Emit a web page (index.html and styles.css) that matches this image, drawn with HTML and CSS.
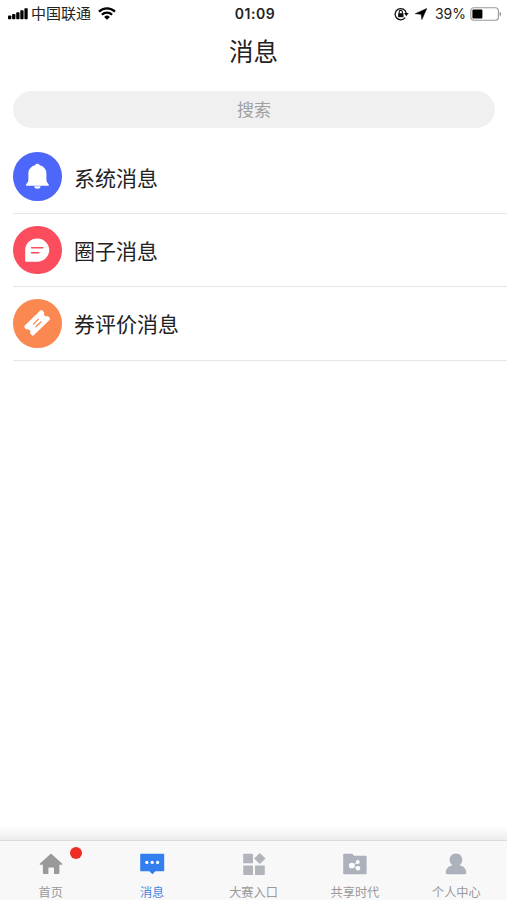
FILE: index.html
```html
<!DOCTYPE html>
<html lang="zh-CN">

<head>
    <meta charset="UTF-8">
    <meta name="viewport" content="width=device-width, initial-scale=1.0">
    <title>消息</title>
    <link rel="stylesheet" href="styles.css">
</head>

<body>
    <!-- 状态栏 -->
    <div class="status-bar">
        <div class="status-left">
            <svg class="signal" width="20" height="12" viewBox="0 0 20 12">
                <rect x="0" y="7.5" width="3.3" height="3.8" rx="0.8" />
                <rect x="4.1" y="6" width="3.3" height="5.3" rx="0.8" />
                <rect x="8.2" y="4.3" width="3.3" height="7" rx="0.8" />
                <rect x="12.3" y="2.3" width="3.3" height="9" rx="0.8" />
                <rect x="16.4" y="0.3" width="3.3" height="11" rx="0.8" />
            </svg>
            <span class="carrier">中国联通</span>
            <svg width="18" height="13" viewBox="0 0 18 13" fill="none" stroke="#000" stroke-width="2.3">
                <path d="M1 4.6a11.4 11.4 0 0 1 16 0" />
                <path d="M3.9 7.8a7.3 7.3 0 0 1 10.2 0" />
                <path d="M9 12.8L6.1 9.9a4.1 4.1 0 0 1 5.8 0z" fill="#000" stroke="none" />
            </svg>
        </div>
        <span class="time">01:09</span>
        <div class="status-right">
            <svg width="15" height="14" viewBox="0 0 15 14" fill="none" stroke="#111">
                <path d="M11.2 10.6A5.6 5.6 0 1 1 12.2 6" stroke-width="1.3" />
                <path d="M10 6h4.6l-2.3 3.2z" fill="#111" stroke="none" />
                <rect x="4.1" y="6.2" width="5.4" height="4" fill="#111" stroke="none" />
                <path d="M5.2 6.5V5a1.6 1.6 0 0 1 3.2 0v1.5" stroke-width="1.1" />
            </svg>
            <svg class="location" width="12" height="12" viewBox="0 0 12 12">
                <path d="M11.8 0.4L6.9 11.6L6.1 6.3L0.2 5.7z" stroke="#000" stroke-width="0.5" />
            </svg>
            <span class="percent">39%</span>
            <svg width="32" height="14" viewBox="0 0 32 14">
                <rect x="0.8" y="0.8" width="27.6" height="12.4" rx="3" fill="#fff" stroke="#999" stroke-width="1.1" />
                <rect x="2.4" y="2.4" width="10" height="9.2" rx="1" />
                <path d="M29.6 4.8a2.3 2.3 0 0 1 0 4.4z" fill="#999" />
            </svg>
        </div>
    </div>

    <h1 class="title">消息</h1>

    <div class="search">搜索</div>

    <!-- 消息列表 -->
    <div class="list">
        <div class="item">
            <div class="icon blue">
                <svg width="48" height="48" viewBox="0 0 48 48" fill="#fff">
                    <path d="M24.4 11.8c1.2 0 2.1 0.6 2.3 1.5c4 1 6.7 4 6.7 8v6.6c0 1.6 0.8 2.5 2.2 4.3c0.5 0.8 0.1 1.5-0.8 1.5H14c-0.9 0-1.3-0.7-0.8-1.5c1.4-1.8 2.2-2.7 2.2-4.3v-6.6c0-4 2.7-7 6.7-8c0.2-0.9 1.1-1.5 2.3-1.5z" />
                    <path d="M21.3 34.2h6.2a3.1 2.5 0 0 1-6.2 0z" />
                </svg>
            </div>
            <span class="name">系统消息</span>
        </div>
        <div class="item">
            <div class="icon red">
                <svg width="48" height="48" viewBox="0 0 48 48">
                    <path d="M12.2 35.2V24a12 11.6 0 1 1 12 11.7H12.8z" fill="#fff" />
                    <path d="M18.6 21.8h11.2M18.6 26.8h7.3" stroke="#fb4d5d" stroke-width="1.6" stroke-linecap="round" />
                </svg>
            </div>
            <span class="name">圈子消息</span>
        </div>
        <div class="item">
            <div class="icon orange">
                <svg width="48" height="48" viewBox="0 0 48 48">
                    <g transform="rotate(-44 24 24)">
                        <path d="M13.4 17.4h21.6q1.6 0 1.6 1.6v2.4a2.7 2.7 0 0 0 0 5.2v2.4q0 1.6-1.6 1.6H13.4q-1.6 0-1.6-1.6v-2.4a2.7 2.7 0 0 0 0-5.2v-2.4q0-1.6 1.6-1.6z" fill="#fff" />
                        <path d="M20.6 22.3h7.2M20.6 26h7.2" stroke="#fb8850" stroke-width="1.2" stroke-linecap="round" />
                    </g>
                </svg>
            </div>
            <span class="name">券评价消息</span>
        </div>
    </div>

    <!-- 底部导航 -->
    <div class="tab-shadow"></div>
    <nav class="tab-bar">
        <a class="tab home">
            <svg width="26" height="26" viewBox="0 0 26 26">
                <path d="M13 2.6L24.3 12.8q0.5 1-0.8 1H21.4v7.9q0 1.3-1.3 1.3H16v-5.6q0-1-1-1h-3.6q-1 0-1 1V23H6.2q-1.3 0-1.3-1.3v-7.9H2.5q-1.3 0-0.8-1z" fill="#999" />
            </svg>
            <span>首页</span>
            <i class="dot"></i>
        </a>
        <a class="tab active">
            <svg width="26" height="26" viewBox="0 0 26 26">
                <path d="M1.7 2.7h23q0.5 0 0.5 0.5v16.6q0 0.5-0.5 0.5H16.4L13.4 23.2L10.4 20.3H1.7q-0.5 0-0.5-0.5V3.2q0-0.5 0.5-0.5z" fill="#337ff0" />
                <g fill="#fff">
                    <circle cx="7.8" cy="11.4" r="1.6" />
                    <circle cx="13.2" cy="11.4" r="1.6" />
                    <circle cx="18.6" cy="11.4" r="1.6" />
                </g>
            </svg>
            <span>消息</span>
        </a>
        <a class="tab">
            <svg width="26" height="26" viewBox="0 0 26 26" fill="#b2b4bb">
                <rect x="2.2" y="2.7" width="9.8" height="9.5" rx="0.5" />
                <path d="M18.8 1.9l5.7 5.5l-5.7 5.5l-5.7-5.5z" />
                <rect x="2.2" y="14.4" width="9.8" height="9.5" rx="0.5" />
                <rect x="14" y="14.4" width="9.8" height="9.5" rx="0.5" />
            </svg>
            <span>大赛入口</span>
        </a>
        <a class="tab">
            <svg width="26" height="26" viewBox="0 0 26 26">
                <path d="M2 2.8h8.2l2 2H23.8q0.8 0 0.8 0.8V22.4q0 0.8-0.8 0.8H2q-0.8 0-0.8-0.8V3.6q0-0.8 0.8-0.8z" fill="#adb1bc" />
                <path d="M16 11.2L10.2 14.6L16 17.4" fill="none" stroke="#fff" stroke-width="0.9" />
                <g fill="#fff">
                    <circle cx="9.8" cy="14.6" r="2.9" />
                    <circle cx="15.8" cy="11" r="1.9" />
                    <circle cx="16" cy="17.2" r="2.2" />
                </g>
            </svg>
            <span>共享时代</span>
        </a>
        <a class="tab">
            <svg width="26" height="26" viewBox="0 0 26 26" fill="#adb1bc">
                <path d="M13 2.6c3.8 0 6.3 2.8 6.3 6.2c0 2.5-1.1 4.3-2.7 5.5c4.3 0.8 6.6 3.6 6.7 7.8q0 1.1-1.1 1.1H3.8q-1.1 0-1.1-1.1c0.1-4.2 2.4-7 6.7-7.8c-1.6-1.2-2.7-3-2.7-5.5c0-3.4 2.5-6.2 6.3-6.2z" />
            </svg>
            <span>个人中心</span>
        </a>
    </nav>
</body>

</html>
```
FILE: styles.css
```css
* {
    box-sizing: border-box;
}

body {
    display: flex;
    flex-direction: column;
    height: 100vh;
    margin: 0;
    font-family: "Liberation Sans", "Noto Sans CJK SC", sans-serif;
    background-color: #fff;
    color: #222;
    overflow: hidden;
}

svg {
    display: block;
    flex-shrink: 0;
}

.status-bar {
    display: grid;
    grid-template-columns: 1fr auto 1fr;
    align-items: center;
    height: 27px;
    padding: 0 5px 0 8px;
}

.status-left,
.status-right {
    display: flex;
    align-items: center;
}

.status-right {
    justify-content: flex-end;
}

.carrier {
    margin: 0 7px 0 3px;
    padding-top: 1px;
    font-size: 15px;
    line-height: 20px;
}

.time {
    font-family: Inter, sans-serif;
    font-size: 14px;
    font-weight: 600;
    letter-spacing: 0.5px;
}

.location {
    margin: 0 8px 0 6px;
}

.percent {
    margin-right: 4px;
    font-family: Inter, sans-serif;
    font-size: 14px;
}

.title {
    height: 48px;
    margin: 0;
    padding-top: 2px;
    font-size: 24.5px;
    font-weight: 400;
    line-height: 48px;
    text-align: center;
}

.search {
    height: 37px;
    margin: 16px 12px 0 13px;
    border-radius: 19px;
    background-color: #f0f0f0;
    color: #a0a0a0;
    font-size: 17px;
    line-height: 39px;
    text-align: center;
}

.list {
    flex: 1;
    margin: 12.5px 0 0 13px;
}

.item {
    display: flex;
    align-items: center;
    height: 73.4px;
    border-bottom: 1px solid #e6e6e8;
}

.icon {
    width: 48.5px;
    height: 48.5px;
    margin-right: 12.5px;
    border-radius: 50%;
}

.blue {
    background-color: #4e67fb;
}

.red {
    background-color: #fb4d5d;
}

.orange {
    background-color: #fb8850;
}

.name {
    padding-top: 4px;
    font-size: 21px;
    line-height: 30px;
}

.tab-shadow {
    height: 14px;
    background: linear-gradient(#fff, #ececec);
}

.tab-bar {
    display: flex;
    height: 60px;
    border-top: 1px solid #dcdcdc;
    background-color: #f8f8f8;
}

.tab {
    position: relative;
    display: flex;
    flex: 1;
    flex-direction: column;
    align-items: center;
    padding-top: 10px;
    color: #999;
    font-size: 12.2px;
    line-height: 18px;
}

.tab span {
    margin-top: 7px;
}

.active {
    color: #4b86dc;
}

/* 未读红点 */
.dot {
    position: absolute;
    top: 6px;
    left: 70px;
    width: 12px;
    height: 12px;
    border-radius: 50%;
    background-color: #f02d22;
}
```
